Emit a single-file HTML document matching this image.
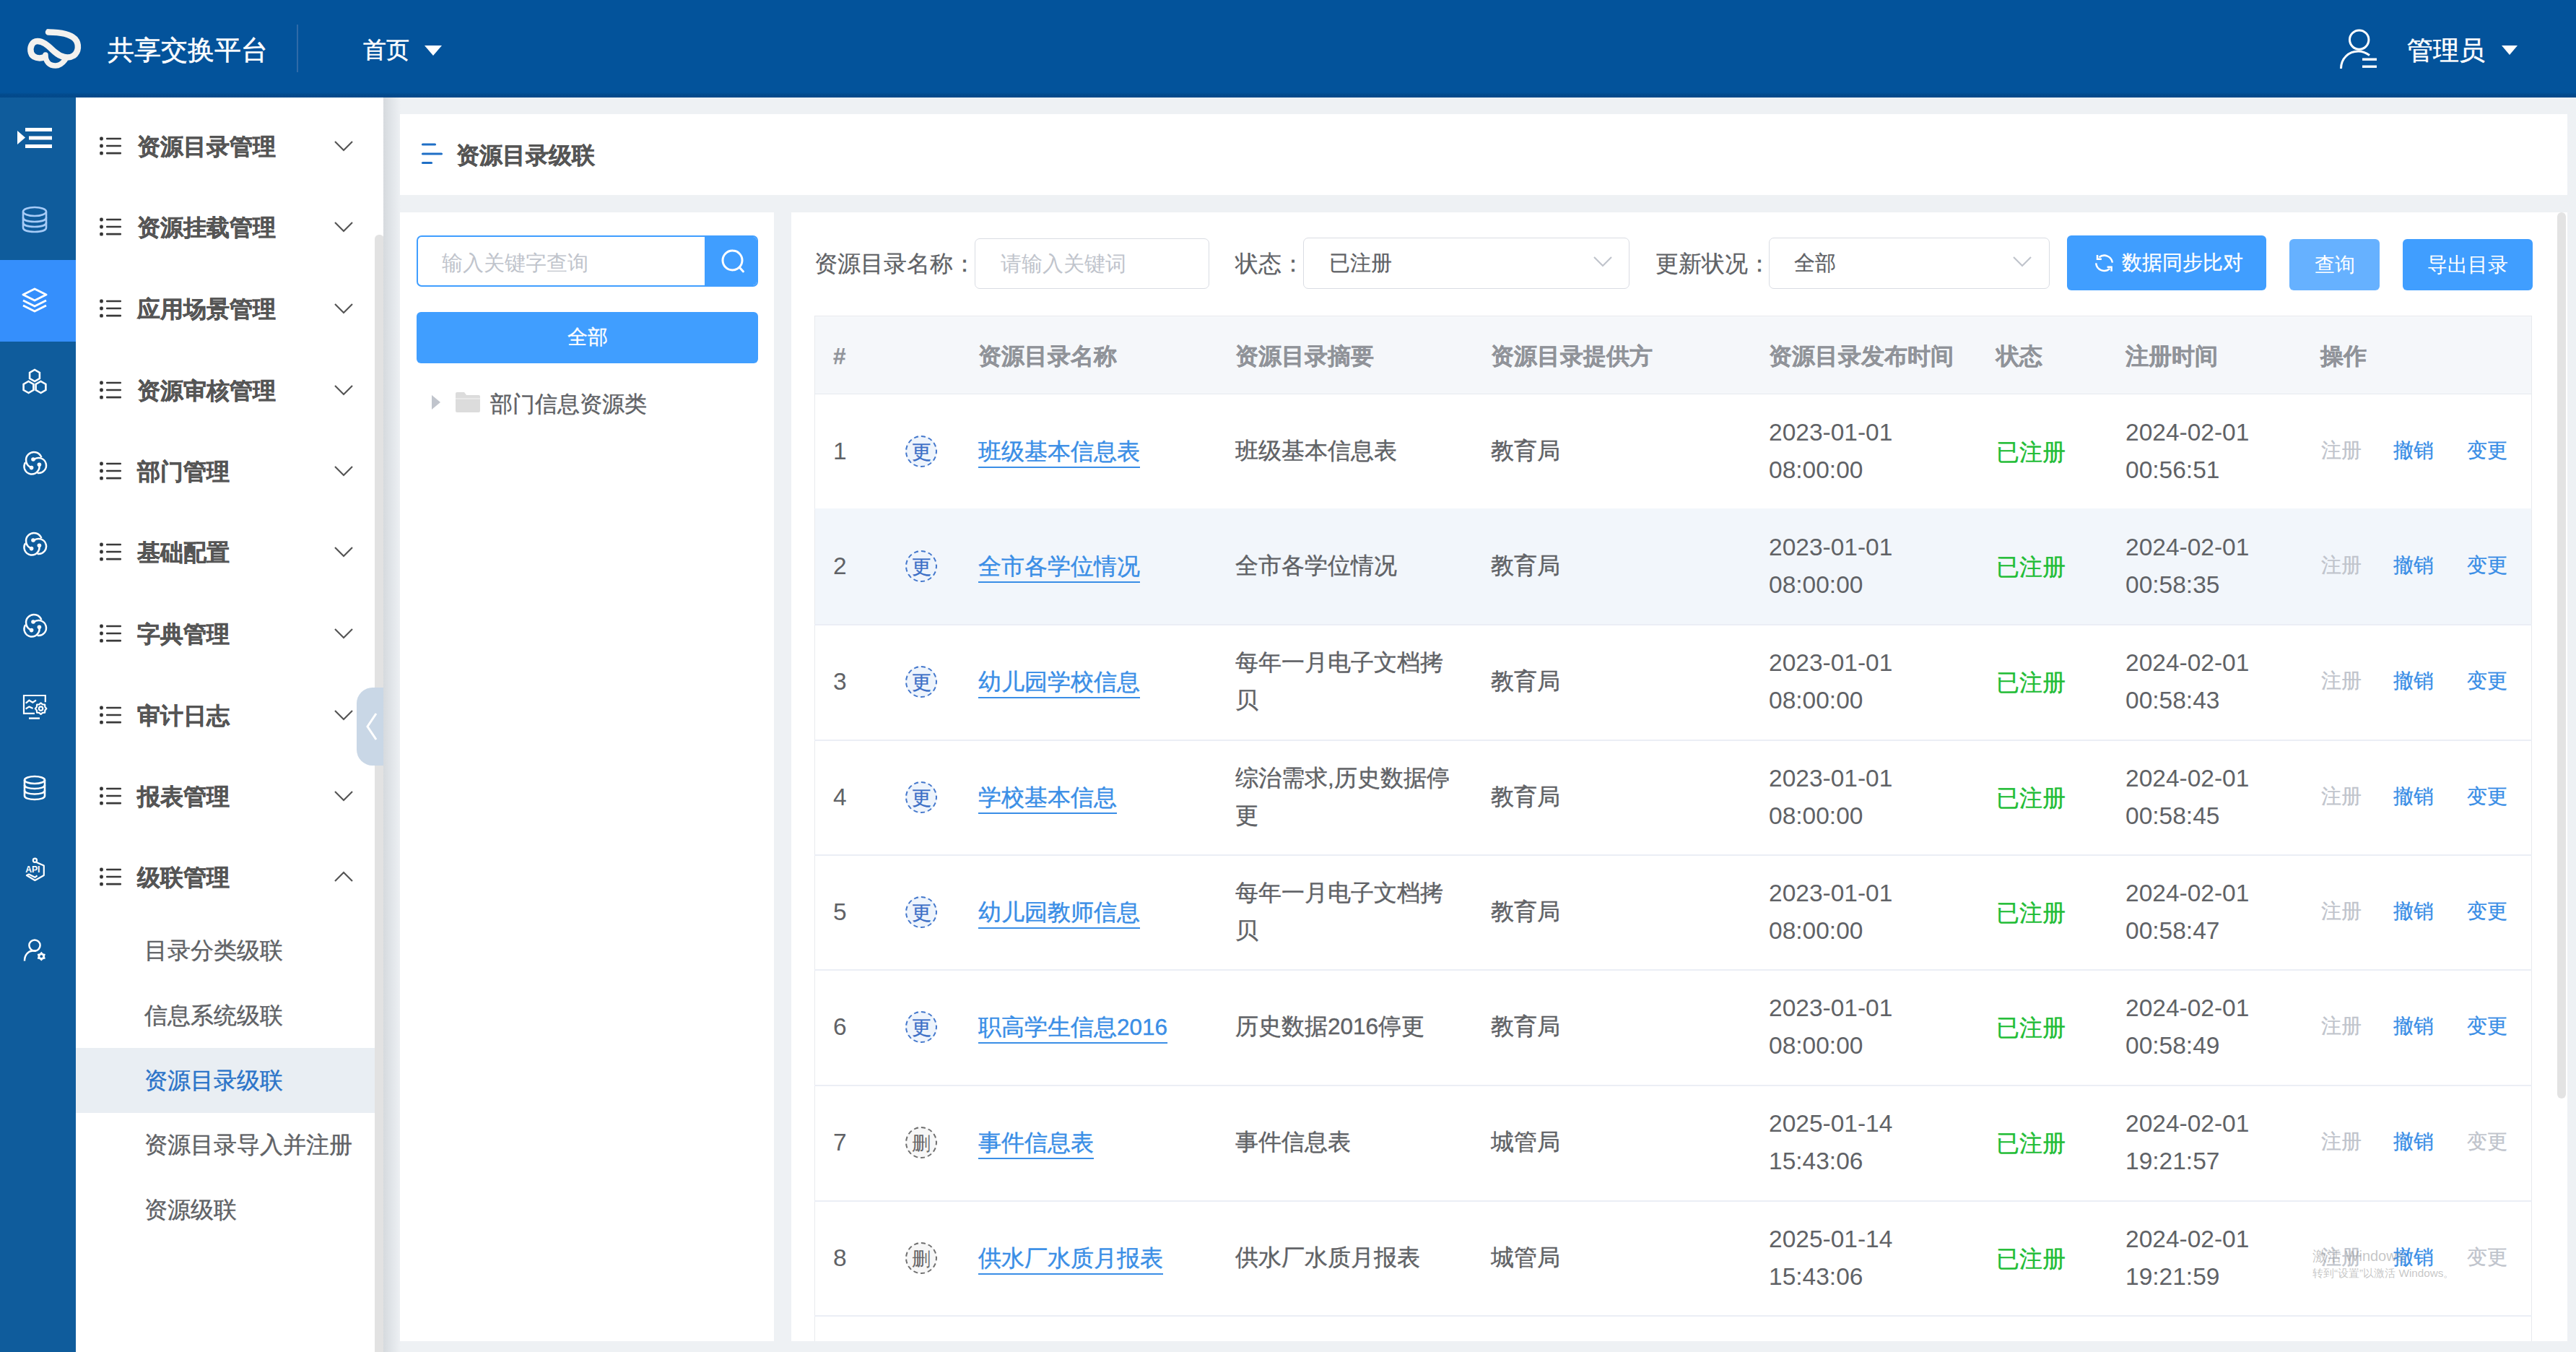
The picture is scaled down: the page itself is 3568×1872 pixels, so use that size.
<!DOCTYPE html><html><head><meta charset="utf-8"><style>
*{margin:0;padding:0;box-sizing:border-box}
html,body{width:3568px;height:1872px;overflow:hidden}
body{position:relative;background:#eef1f4;font-family:"Liberation Sans",sans-serif;color:#606266}
.a{position:absolute}
.t{position:absolute;white-space:nowrap;line-height:1}
#hdr{left:0;top:0;width:3568px;height:135px;background:linear-gradient(to bottom,#03539b 0,#03539b 128px,#024a8c 131px,#03498a 135px)}
#rail{left:0;top:135px;width:105px;height:1737px;background:#0f5c9c}
#side{left:105px;top:135px;width:427px;height:1737px;background:#fff}
.mi{font-weight:bold;font-size:31.5px;color:#555;-webkit-text-stroke:0.45px #555}
.sub{font-size:31.5px;-webkit-text-stroke:0.4px currentColor}
.panel{background:#fff}
.lbl{font-size:31.5px;color:#606266;-webkit-text-stroke:0.25px currentColor}
.ph{font-size:29px;color:#c0c4cc}
.btn{background:#409eff;border-radius:6px}
.th{font-weight:bold;font-size:31.5px;color:#909399;-webkit-text-stroke:0.25px currentColor}
.td{font-size:31.5px;color:#606266;-webkit-text-stroke:0.4px currentColor}
.num{font-size:33.5px;color:#606266}
.lnk{font-size:31.5px;color:#3a8ee6;text-decoration:underline;text-underline-offset:10px;text-decoration-thickness:2px;-webkit-text-stroke:0.4px currentColor}
.ok{font-size:31.5px;color:#1fbd36;-webkit-text-stroke:0.4px currentColor}
.op{font-size:28px;-webkit-text-stroke:0.3px currentColor}
.hl{position:absolute;left:1128px;width:2379px;height:1.5px;background:#ebeef5}
</style></head><body>
<div id="hdr" class="a">
<svg class="a" style="left:34px;top:36px" width="82" height="64" viewBox="0 0 82 64">
<path d="M33 8.5 C47 8.5, 63 11, 70 18 C76 25, 75 36, 68 41 C60 46, 50 43, 42 36 C34 29, 27 21, 18 21 C10 21, 7 30, 9 37 C11 44, 20 46, 28 43" fill="none" stroke="#f3f1ee" stroke-width="8.5" stroke-linecap="round"/>
<path d="M29 40 C29 50, 35 55, 43 55 C49 55, 53 51, 56 47" fill="none" stroke="#f3f1ee" stroke-width="7.5" stroke-linecap="round"/>
<path d="M30 4 L40 6 L40 11 Z" fill="#f3f1ee"/>
</svg>
<div class="t" style="left:149px;top:52px;font-size:36.5px;color:#fff;-webkit-text-stroke:0.5px #fff">共享交换平台</div>
<div class="a" style="left:411px;top:34px;width:2px;height:66px;background:#2f6aa8"></div>
<div class="t" style="left:503px;top:53px;font-size:32px;color:#fff;-webkit-text-stroke:0.5px #fff">首页</div>
<svg class="a" style="left:587px;top:62px" width="26" height="16" viewBox="0 0 26 16"><path d="M1 1 L25 1 L13 15 Z" fill="#fff"/></svg>
<svg class="a" style="left:3238px;top:39px" width="58" height="60" viewBox="0 0 58 60">
<circle cx="29.7" cy="16.1" r="13.2" fill="none" stroke="#fff" stroke-width="3"/>
<path d="M4.5 56 C4.5 42, 15 32, 28.5 32 C34 32, 39 34, 44 37.5" fill="none" stroke="#fff" stroke-width="3"/>
<rect x="34" y="41.5" width="20" height="3.4" fill="#fff"/><rect x="34" y="51.5" width="20" height="3.4" fill="#fff"/>
</svg>
<div class="t" style="left:3334px;top:52px;font-size:36px;color:#fff;-webkit-text-stroke:0.5px #fff">管理员</div>
<svg class="a" style="left:3464px;top:62px" width="24" height="15" viewBox="0 0 24 15"><path d="M1 1 L23 1 L12 14 Z" fill="#fff"/></svg>
</div>
<div id="rail" class="a"></div>
<div class="a" style="left:0;top:360px;width:105px;height:113px;background:#358ffc"></div>
<svg class="a" style="left:22px;top:175px" width="54" height="32" viewBox="0 0 54 32"><path d="M2 6 L13 15.5 L2 25 Z" fill="#fff"/><rect x="13" y="2" width="37" height="5" fill="#fff"/><rect x="18" y="13.5" width="32" height="5" fill="#fff"/><rect x="13" y="25" width="37" height="5" fill="#fff"/></svg>
<svg class="a" style="left:29px;top:285px" width="38" height="38" viewBox="0 0 38 38" fill="none" stroke="#a6cbf7" stroke-width="2.6"><ellipse cx="19" cy="8" rx="16" ry="6"/><path d="M3 8 V30 C3 34 10 36 19 36 C28 36 35 34 35 30 V8"/><path d="M3 16 C3 20 10 22 19 22 C28 22 35 20 35 16"/><path d="M3 23 C3 27 10 29 19 29 C28 29 35 27 35 23"/></svg>
<svg class="a" style="left:29px;top:397px" width="38" height="38" viewBox="0 0 38 38" fill="none" stroke="#fff" stroke-width="3" stroke-linejoin="round"><path d="M19 3 L35 11 L19 19 L3 11 Z"/><path d="M3 19 L19 27 L35 19"/><path d="M3 26 L19 34 L35 26"/></svg>
<svg class="a" style="left:29px;top:510px" width="38" height="38" viewBox="0 0 38 38" fill="none" stroke="#fff" stroke-width="2.6"><path d="M19.0 18.0 L12.1 14.0 L12.1 6.0 L19.0 2.0 L25.9 6.0 L25.9 14.0 Z"/><path d="M10.5 34.0 L3.6 30.0 L3.6 22.0 L10.5 18.0 L17.4 22.0 L17.4 30.0 Z"/><path d="M27.5 34.0 L20.6 30.0 L20.6 22.0 L27.5 18.0 L34.4 22.0 L34.4 30.0 Z"/></svg>
<svg class="a" style="left:24px;top:615px" width="48" height="50" viewBox="0 0 48 50" fill="none" stroke="#fff" stroke-width="2.5"><path d="M33.4 18.4 A11 11 0 1 0 19.24 32.34"/><path d="M22.47 21.7 A10.5 10.5 0 1 1 27.68 39.84"/><path d="M30.09 28.1 A10.5 10.5 0 1 1 11.2 25.28"/><circle cx="19.6" cy="32.6" r="2.8" fill="#fff" stroke="none"/><circle cx="22" cy="21" r="2.8" fill="#fff" stroke="none"/><circle cx="30.4" cy="28.2" r="2.8" fill="#fff" stroke="none"/></svg>
<svg class="a" style="left:24px;top:727px" width="48" height="50" viewBox="0 0 48 50" fill="none" stroke="#fff" stroke-width="2.5"><path d="M33.4 18.4 A11 11 0 1 0 19.24 32.34"/><path d="M22.47 21.7 A10.5 10.5 0 1 1 27.68 39.84"/><path d="M30.09 28.1 A10.5 10.5 0 1 1 11.2 25.28"/><circle cx="19.6" cy="32.6" r="2.8" fill="#fff" stroke="none"/><circle cx="22" cy="21" r="2.8" fill="#fff" stroke="none"/><circle cx="30.4" cy="28.2" r="2.8" fill="#fff" stroke="none"/></svg>
<svg class="a" style="left:24px;top:840px" width="48" height="50" viewBox="0 0 48 50" fill="none" stroke="#fff" stroke-width="2.5"><path d="M33.4 18.4 A11 11 0 1 0 19.24 32.34"/><path d="M22.47 21.7 A10.5 10.5 0 1 1 27.68 39.84"/><path d="M30.09 28.1 A10.5 10.5 0 1 1 11.2 25.28"/><circle cx="19.6" cy="32.6" r="2.8" fill="#fff" stroke="none"/><circle cx="22" cy="21" r="2.8" fill="#fff" stroke="none"/><circle cx="30.4" cy="28.2" r="2.8" fill="#fff" stroke="none"/></svg>
<svg class="a" style="left:20px;top:950px" width="56" height="60" viewBox="0 0 56 60" fill="none" stroke="#fff" stroke-width="2.2"><path d="M28 37.9 H13 V13 H42.8 V22.2"/><path d="M20 44.6 H35" stroke-width="2.4"/><path d="M16.4 23.1 L20.4 19.7 L25.3 22.6 L29.3 20" stroke-linecap="round"/><path d="M16.4 31 L20.4 28.4 L24.8 30.6" stroke-linecap="round"/><path d="M36.60 23.30 L38.97 25.37 L42.12 25.58 L42.33 28.73 L44.40 31.10 L42.33 33.47 L42.12 36.62 L38.97 36.83 L36.60 38.90 L34.23 36.83 L31.08 36.62 L30.87 33.47 L28.80 31.10 L30.87 28.73 L31.08 25.58 L34.23 25.37 Z" stroke-linejoin="round"/><circle cx="36.6" cy="31.1" r="2.7"/></svg>
<svg class="a" style="left:31px;top:1073px" width="34" height="36" viewBox="0 0 34 36" fill="none" stroke="#fff" stroke-width="2.6"><ellipse cx="17" cy="7" rx="14" ry="5"/><path d="M3 7 V29 C3 32 9 34 17 34 C25 34 31 32 31 29 V7"/><path d="M3 14 C3 17 9 19 17 19 C25 19 31 17 31 14"/><path d="M3 21.5 C3 24.5 9 26.5 17 26.5 C25 26.5 31 24.5 31 21.5"/></svg>
<svg class="a" style="left:20px;top:1172px" width="56" height="60" viewBox="0 0 56 60" fill="none" stroke="#fff" stroke-width="2.2" stroke-linejoin="round"><circle cx="28.4" cy="19.3" r="2.6"/><path d="M30.5 22 L40.8 26.5 V40 L28.4 47 L16.9 40 L20 38.5 L28.4 42.8 L31.5 40.4"/><text x="15.2" y="35.6" font-family="Liberation Sans" font-weight="bold" font-size="12.2" fill="#fff" stroke="none">API</text></svg>
<svg class="a" style="left:20px;top:1286px" width="56" height="60" viewBox="0 0 56 60" fill="none" stroke="#fff" stroke-width="2.5"><circle cx="28" cy="23.1" r="7.6"/><path d="M14 44.5 C14 36, 19 31, 25 30.5 L30 30.5"/><path d="M37.30 31.80 L39.60 34.22 L42.84 35.00 L41.90 38.20 L42.84 41.40 L39.60 42.18 L37.30 44.60 L35.00 42.18 L31.76 41.40 L32.70 38.20 L31.76 35.00 L35.00 34.22 Z" fill="#fff" stroke="none"/><circle cx="37.3" cy="38.2" r="1.9" fill="#0f5c9c" stroke="none"/></svg>
<div id="side" class="a"></div>
<div class="a" style="left:519px;top:325px;width:13px;height:1560px;background:#e2e2e2;border-radius:6px 6px 0 0"></div>
<svg class="a" style="left:137px;top:189.4px" width="34" height="28" viewBox="0 0 34 28"><rect x="1.2" y="0.6000000000000001" width="4.6" height="4.8" rx="1.6" fill="#333"/><rect x="10" y="1.7" width="21" height="2.6" rx="1" fill="#3a3a3a"/><rect x="1.2" y="10.6" width="4.6" height="4.8" rx="1.6" fill="#333"/><rect x="10" y="11.7" width="21" height="2.6" rx="1" fill="#3a3a3a"/><rect x="1.2" y="20.700000000000003" width="4.6" height="4.8" rx="1.6" fill="#333"/><rect x="10" y="21.8" width="21" height="2.6" rx="1" fill="#3a3a3a"/></svg>
<div class="t mi" style="left:190px;top:188px">资源目录管理</div>
<svg class="a" style="left:462px;top:192px" width="28" height="20" viewBox="0 0 28 20"><path d="M2 4 L14 16 L26 4" fill="none" stroke="#555" stroke-width="2.2"/></svg>
<svg class="a" style="left:137px;top:301.4px" width="34" height="28" viewBox="0 0 34 28"><rect x="1.2" y="0.6000000000000001" width="4.6" height="4.8" rx="1.6" fill="#333"/><rect x="10" y="1.7" width="21" height="2.6" rx="1" fill="#3a3a3a"/><rect x="1.2" y="10.6" width="4.6" height="4.8" rx="1.6" fill="#333"/><rect x="10" y="11.7" width="21" height="2.6" rx="1" fill="#3a3a3a"/><rect x="1.2" y="20.700000000000003" width="4.6" height="4.8" rx="1.6" fill="#333"/><rect x="10" y="21.8" width="21" height="2.6" rx="1" fill="#3a3a3a"/></svg>
<div class="t mi" style="left:190px;top:300px">资源挂载管理</div>
<svg class="a" style="left:462px;top:304px" width="28" height="20" viewBox="0 0 28 20"><path d="M2 4 L14 16 L26 4" fill="none" stroke="#555" stroke-width="2.2"/></svg>
<svg class="a" style="left:137px;top:414.4px" width="34" height="28" viewBox="0 0 34 28"><rect x="1.2" y="0.6000000000000001" width="4.6" height="4.8" rx="1.6" fill="#333"/><rect x="10" y="1.7" width="21" height="2.6" rx="1" fill="#3a3a3a"/><rect x="1.2" y="10.6" width="4.6" height="4.8" rx="1.6" fill="#333"/><rect x="10" y="11.7" width="21" height="2.6" rx="1" fill="#3a3a3a"/><rect x="1.2" y="20.700000000000003" width="4.6" height="4.8" rx="1.6" fill="#333"/><rect x="10" y="21.8" width="21" height="2.6" rx="1" fill="#3a3a3a"/></svg>
<div class="t mi" style="left:190px;top:413px">应用场景管理</div>
<svg class="a" style="left:462px;top:417px" width="28" height="20" viewBox="0 0 28 20"><path d="M2 4 L14 16 L26 4" fill="none" stroke="#555" stroke-width="2.2"/></svg>
<svg class="a" style="left:137px;top:527.4px" width="34" height="28" viewBox="0 0 34 28"><rect x="1.2" y="0.6000000000000001" width="4.6" height="4.8" rx="1.6" fill="#333"/><rect x="10" y="1.7" width="21" height="2.6" rx="1" fill="#3a3a3a"/><rect x="1.2" y="10.6" width="4.6" height="4.8" rx="1.6" fill="#333"/><rect x="10" y="11.7" width="21" height="2.6" rx="1" fill="#3a3a3a"/><rect x="1.2" y="20.700000000000003" width="4.6" height="4.8" rx="1.6" fill="#333"/><rect x="10" y="21.8" width="21" height="2.6" rx="1" fill="#3a3a3a"/></svg>
<div class="t mi" style="left:190px;top:526px">资源审核管理</div>
<svg class="a" style="left:462px;top:530px" width="28" height="20" viewBox="0 0 28 20"><path d="M2 4 L14 16 L26 4" fill="none" stroke="#555" stroke-width="2.2"/></svg>
<svg class="a" style="left:137px;top:639.4px" width="34" height="28" viewBox="0 0 34 28"><rect x="1.2" y="0.6000000000000001" width="4.6" height="4.8" rx="1.6" fill="#333"/><rect x="10" y="1.7" width="21" height="2.6" rx="1" fill="#3a3a3a"/><rect x="1.2" y="10.6" width="4.6" height="4.8" rx="1.6" fill="#333"/><rect x="10" y="11.7" width="21" height="2.6" rx="1" fill="#3a3a3a"/><rect x="1.2" y="20.700000000000003" width="4.6" height="4.8" rx="1.6" fill="#333"/><rect x="10" y="21.8" width="21" height="2.6" rx="1" fill="#3a3a3a"/></svg>
<div class="t mi" style="left:190px;top:638px">部门管理</div>
<svg class="a" style="left:462px;top:642px" width="28" height="20" viewBox="0 0 28 20"><path d="M2 4 L14 16 L26 4" fill="none" stroke="#555" stroke-width="2.2"/></svg>
<svg class="a" style="left:137px;top:751.4px" width="34" height="28" viewBox="0 0 34 28"><rect x="1.2" y="0.6000000000000001" width="4.6" height="4.8" rx="1.6" fill="#333"/><rect x="10" y="1.7" width="21" height="2.6" rx="1" fill="#3a3a3a"/><rect x="1.2" y="10.6" width="4.6" height="4.8" rx="1.6" fill="#333"/><rect x="10" y="11.7" width="21" height="2.6" rx="1" fill="#3a3a3a"/><rect x="1.2" y="20.700000000000003" width="4.6" height="4.8" rx="1.6" fill="#333"/><rect x="10" y="21.8" width="21" height="2.6" rx="1" fill="#3a3a3a"/></svg>
<div class="t mi" style="left:190px;top:750px">基础配置</div>
<svg class="a" style="left:462px;top:754px" width="28" height="20" viewBox="0 0 28 20"><path d="M2 4 L14 16 L26 4" fill="none" stroke="#555" stroke-width="2.2"/></svg>
<svg class="a" style="left:137px;top:864.4px" width="34" height="28" viewBox="0 0 34 28"><rect x="1.2" y="0.6000000000000001" width="4.6" height="4.8" rx="1.6" fill="#333"/><rect x="10" y="1.7" width="21" height="2.6" rx="1" fill="#3a3a3a"/><rect x="1.2" y="10.6" width="4.6" height="4.8" rx="1.6" fill="#333"/><rect x="10" y="11.7" width="21" height="2.6" rx="1" fill="#3a3a3a"/><rect x="1.2" y="20.700000000000003" width="4.6" height="4.8" rx="1.6" fill="#333"/><rect x="10" y="21.8" width="21" height="2.6" rx="1" fill="#3a3a3a"/></svg>
<div class="t mi" style="left:190px;top:863px">字典管理</div>
<svg class="a" style="left:462px;top:867px" width="28" height="20" viewBox="0 0 28 20"><path d="M2 4 L14 16 L26 4" fill="none" stroke="#555" stroke-width="2.2"/></svg>
<svg class="a" style="left:137px;top:977.4px" width="34" height="28" viewBox="0 0 34 28"><rect x="1.2" y="0.6000000000000001" width="4.6" height="4.8" rx="1.6" fill="#333"/><rect x="10" y="1.7" width="21" height="2.6" rx="1" fill="#3a3a3a"/><rect x="1.2" y="10.6" width="4.6" height="4.8" rx="1.6" fill="#333"/><rect x="10" y="11.7" width="21" height="2.6" rx="1" fill="#3a3a3a"/><rect x="1.2" y="20.700000000000003" width="4.6" height="4.8" rx="1.6" fill="#333"/><rect x="10" y="21.8" width="21" height="2.6" rx="1" fill="#3a3a3a"/></svg>
<div class="t mi" style="left:190px;top:976px">审计日志</div>
<svg class="a" style="left:462px;top:980px" width="28" height="20" viewBox="0 0 28 20"><path d="M2 4 L14 16 L26 4" fill="none" stroke="#555" stroke-width="2.2"/></svg>
<svg class="a" style="left:137px;top:1089.4px" width="34" height="28" viewBox="0 0 34 28"><rect x="1.2" y="0.6000000000000001" width="4.6" height="4.8" rx="1.6" fill="#333"/><rect x="10" y="1.7" width="21" height="2.6" rx="1" fill="#3a3a3a"/><rect x="1.2" y="10.6" width="4.6" height="4.8" rx="1.6" fill="#333"/><rect x="10" y="11.7" width="21" height="2.6" rx="1" fill="#3a3a3a"/><rect x="1.2" y="20.700000000000003" width="4.6" height="4.8" rx="1.6" fill="#333"/><rect x="10" y="21.8" width="21" height="2.6" rx="1" fill="#3a3a3a"/></svg>
<div class="t mi" style="left:190px;top:1088px">报表管理</div>
<svg class="a" style="left:462px;top:1092px" width="28" height="20" viewBox="0 0 28 20"><path d="M2 4 L14 16 L26 4" fill="none" stroke="#555" stroke-width="2.2"/></svg>
<svg class="a" style="left:137px;top:1201.4px" width="34" height="28" viewBox="0 0 34 28"><rect x="1.2" y="0.6000000000000001" width="4.6" height="4.8" rx="1.6" fill="#333"/><rect x="10" y="1.7" width="21" height="2.6" rx="1" fill="#3a3a3a"/><rect x="1.2" y="10.6" width="4.6" height="4.8" rx="1.6" fill="#333"/><rect x="10" y="11.7" width="21" height="2.6" rx="1" fill="#3a3a3a"/><rect x="1.2" y="20.700000000000003" width="4.6" height="4.8" rx="1.6" fill="#333"/><rect x="10" y="21.8" width="21" height="2.6" rx="1" fill="#3a3a3a"/></svg>
<div class="t mi" style="left:190px;top:1200px">级联管理</div>
<svg class="a" style="left:462px;top:1204px" width="28" height="20" viewBox="0 0 28 20"><path d="M2 16 L14 4 L26 16" fill="none" stroke="#555" stroke-width="2.2"/></svg>
<div class="a" style="left:105px;top:1451px;width:414px;height:90px;background:#e9eef3"></div>
<div class="t sub" style="left:200px;top:1301px;color:#606266">目录分类级联</div>
<div class="t sub" style="left:200px;top:1391px;color:#606266">信息系统级联</div>
<div class="t sub" style="left:200px;top:1481px;color:#2b74c9">资源目录级联</div>
<div class="t sub" style="left:200px;top:1570px;color:#606266">资源目录导入并注册</div>
<div class="t sub" style="left:200px;top:1660px;color:#606266">资源级联</div>
<div class="a" style="left:494px;top:952px;width:38px;height:108px;background:#c9d7e6;border-radius:22px 0 0 22px"></div>
<svg class="a" style="left:505px;top:986px" width="20" height="40" viewBox="0 0 20 40"><path d="M16 2 L4 20 L16 38" fill="none" stroke="#fff" stroke-width="3"/></svg>
<div class="a" style="left:531px;top:135px;width:24px;height:1737px;background:linear-gradient(to right,#d6dade,#dfe3e7 40%,#eef1f4)"></div>
<div class="a panel" style="left:554px;top:158px;width:3002px;height:112px"></div>
<svg class="a" style="left:582px;top:197px" width="34" height="32" viewBox="0 0 34 32" stroke="#1f6fc6" stroke-width="3.2" stroke-linecap="round"><path d="M3.5 3 H20.5"/><path d="M3.5 16 H29.5"/><path d="M3.5 28.5 H15.5"/></svg>
<div class="t mi" style="left:632px;top:200px;color:#555">资源目录级联</div>
<div class="a panel" style="left:554px;top:294px;width:518px;height:1563px"></div>
<div class="a" style="left:577px;top:326px;width:473px;height:71px;border:2px solid #409eff;border-radius:7px;overflow:hidden;background:#fff"><div class="a" style="left:397px;top:0;width:76px;height:71px;background:#409eff"></div></div>
<div class="t ph" style="left:612px;top:349px;font-size:29.3px">输入关键字查询</div>
<svg class="a" style="left:996px;top:342px" width="40" height="40" viewBox="0 0 40 40" fill="none" stroke="#fff" stroke-width="3"><circle cx="18.5" cy="18.5" r="13.5"/><path d="M28.5 28.5 L33.5 34" stroke-linecap="round"/></svg>
<div class="a btn" style="left:577px;top:432px;width:473px;height:71px"></div>
<div class="t" style="left:786px;top:453px;font-size:28px;color:#fff;-webkit-text-stroke:0.3px #fff">全部</div>
<svg class="a" style="left:598px;top:547px" width="13" height="20" viewBox="0 0 13 20"><path d="M0 0 L12 10 L0 20 Z" fill="#c0c4cc"/></svg>
<svg class="a" style="left:630px;top:542px" width="36" height="30" viewBox="0 0 36 30"><path d="M1 3 Q1 1 3 1 H13 L16 5 H33 Q35 5 35 7 V27 Q35 29 33 29 H3 Q1 29 1 27 Z" fill="#dcdcdc"/><path d="M1 10 H35" stroke="#ececec" stroke-width="1.5"/></svg>
<div class="t td" style="left:679px;top:544px;font-size:31px">部门信息资源类</div>
<div class="a panel" style="left:1096px;top:294px;width:2460px;height:1563px;overflow:hidden">
<div class="t lbl" style="left:32px;top:56px">资源目录名称：</div>
<div class="a" style="left:254px;top:36px;width:325px;height:70px;border:1.5px solid #d9dce3;border-radius:7px"></div>
<div class="t ph" style="left:290px;top:57px">请输入关键词</div>
<div class="t lbl" style="left:615px;top:56px">状态：</div>
<div class="a" style="left:709px;top:35px;width:452px;height:71px;border:1.5px solid #d9dce3;border-radius:7px"></div>
<div class="t lbl" style="left:745px;top:56px;font-size:29px">已注册</div>
<svg class="a" style="left:1110px;top:58px" width="28" height="20" viewBox="0 0 28 20"><path d="M2 4 L14 16 L26 4" fill="none" stroke="#c0c4cc" stroke-width="2.2"/></svg>
<div class="t lbl" style="left:1197px;top:56px">更新状况：</div>
<div class="a" style="left:1354px;top:35px;width:389px;height:71px;border:1.5px solid #d9dce3;border-radius:7px"></div>
<div class="t lbl" style="left:1389px;top:56px;font-size:29px">全部</div>
<svg class="a" style="left:1691px;top:58px" width="28" height="20" viewBox="0 0 28 20"><path d="M2 4 L14 16 L26 4" fill="none" stroke="#c0c4cc" stroke-width="2.2"/></svg>
<div class="a btn" style="left:1767px;top:32px;width:276px;height:76px"></div>
<svg class="a" style="left:1794px;top:46px" width="60" height="50" viewBox="0 0 60 50" fill="none" stroke="#fff" stroke-width="2.5"><path d="M35.9 23.7 A11.3 11.3 0 0 0 17.5 16.3"/><path d="M15 13 V18.8 H20.9"/><path d="M13.2 24.4 A11.3 11.3 0 0 0 32.2 31.8"/><path d="M28.6 29.8 H34.6 V35.8"/></svg>
<div class="t" style="left:1843px;top:56px;font-size:28px;color:#fff;-webkit-text-stroke:0.3px #fff">数据同步比对</div>
<div class="a btn" style="left:2075px;top:37px;width:125px;height:71px;background:#66b1ff"></div>
<div class="t" style="left:2110px;top:59px;font-size:28px;color:#fff">查询</div>
<div class="a btn" style="left:2232px;top:37px;width:180px;height:71px"></div>
<div class="t" style="left:2266px;top:59px;font-size:28px;color:#fff">导出目录</div>
<div class="a" style="left:2446px;top:0px;width:12px;height:1227px;background:#e3e3e3;border-radius:6px"></div>
<div class="a" style="left:32px;top:143px;width:2379px;height:108px;background:#f5f7fa"></div>
<div class="a" style="left:32px;top:143px;width:2379px;height:1500px;border:1.5px solid #e8eaee;border-bottom:none"></div>
<div class="a" style="left:32px;top:250.5px;width:2379px;height:1.5px;background:#e6e9ee"></div>
<div class="t th" style="left:58px;top:184px">#</div>
<div class="t th" style="left:259px;top:184px">资源目录名称</div>
<div class="t th" style="left:615px;top:184px">资源目录摘要</div>
<div class="t th" style="left:969px;top:184px">资源目录提供方</div>
<div class="t th" style="left:1354px;top:184px">资源目录发布时间</div>
<div class="t th" style="left:1669px;top:184px">状态</div>
<div class="t th" style="left:1848px;top:184px">注册时间</div>
<div class="t th" style="left:2118px;top:184px">操作</div>
<div class="a" style="left:32px;top:410px;width:2379px;height:1.5px;background:#ebeef5"></div>
<div class="t num" style="left:58px;top:313.5px">1</div>
<div class="a" style="left:158px;top:308.5px;width:44px;height:44px;border-radius:50%;border:2px dashed #4377cc;background:#eef4fc"></div>
<div class="t" style="left:167px;top:318.5px;font-size:27px;color:#3b6fc6;-webkit-text-stroke:0.3px currentColor">更</div>
<div class="t lnk" style="left:259px;top:315.5px">班级基本信息表</div>
<div class="t td" style="left:615px;top:314.5px">班级基本信息表</div>
<div class="t td" style="left:969px;top:314.5px">教育局</div>
<div class="t num" style="left:1354px;top:287.5px">2023-01-01</div>
<div class="t num" style="left:1354px;top:339.5px">08:00:00</div>
<div class="t ok" style="left:1669px;top:316.5px">已注册</div>
<div class="t num" style="left:1848px;top:287.5px">2024-02-01</div>
<div class="t num" style="left:1848px;top:339.5px">00:56:51</div>
<div class="t op" style="left:2119px;top:315.5px;color:#c0c4cc">注册</div>
<div class="t op" style="left:2219px;top:315.5px;color:#3a8ee6">撤销</div>
<div class="t op" style="left:2321px;top:315.5px;color:#3a8ee6">变更</div>
<div class="a" style="left:33px;top:410px;width:2377px;height:160px;background:#f2f6fb"></div>
<div class="a" style="left:32px;top:570px;width:2379px;height:1.5px;background:#ebeef5"></div>
<div class="t num" style="left:58px;top:473.0px">2</div>
<div class="a" style="left:158px;top:468.0px;width:44px;height:44px;border-radius:50%;border:2px dashed #4377cc;background:#eef4fc"></div>
<div class="t" style="left:167px;top:478.0px;font-size:27px;color:#3b6fc6;-webkit-text-stroke:0.3px currentColor">更</div>
<div class="t lnk" style="left:259px;top:475.0px">全市各学位情况</div>
<div class="t td" style="left:615px;top:474.0px">全市各学位情况</div>
<div class="t td" style="left:969px;top:474.0px">教育局</div>
<div class="t num" style="left:1354px;top:447.0px">2023-01-01</div>
<div class="t num" style="left:1354px;top:499.0px">08:00:00</div>
<div class="t ok" style="left:1669px;top:476.0px">已注册</div>
<div class="t num" style="left:1848px;top:447.0px">2024-02-01</div>
<div class="t num" style="left:1848px;top:499.0px">00:58:35</div>
<div class="t op" style="left:2119px;top:475.0px;color:#c0c4cc">注册</div>
<div class="t op" style="left:2219px;top:475.0px;color:#3a8ee6">撤销</div>
<div class="t op" style="left:2321px;top:475.0px;color:#3a8ee6">变更</div>
<div class="a" style="left:32px;top:730px;width:2379px;height:1.5px;background:#ebeef5"></div>
<div class="t num" style="left:58px;top:633.0px">3</div>
<div class="a" style="left:158px;top:628.0px;width:44px;height:44px;border-radius:50%;border:2px dashed #4377cc;background:#eef4fc"></div>
<div class="t" style="left:167px;top:638.0px;font-size:27px;color:#3b6fc6;-webkit-text-stroke:0.3px currentColor">更</div>
<div class="t lnk" style="left:259px;top:635.0px">幼儿园学校信息</div>
<div class="t td" style="left:615px;top:608.0px">每年一月电子文档拷</div>
<div class="t td" style="left:615px;top:660.0px">贝</div>
<div class="t td" style="left:969px;top:634.0px">教育局</div>
<div class="t num" style="left:1354px;top:607.0px">2023-01-01</div>
<div class="t num" style="left:1354px;top:659.0px">08:00:00</div>
<div class="t ok" style="left:1669px;top:636.0px">已注册</div>
<div class="t num" style="left:1848px;top:607.0px">2024-02-01</div>
<div class="t num" style="left:1848px;top:659.0px">00:58:43</div>
<div class="t op" style="left:2119px;top:635.0px;color:#c0c4cc">注册</div>
<div class="t op" style="left:2219px;top:635.0px;color:#3a8ee6">撤销</div>
<div class="t op" style="left:2321px;top:635.0px;color:#3a8ee6">变更</div>
<div class="a" style="left:32px;top:889px;width:2379px;height:1.5px;background:#ebeef5"></div>
<div class="t num" style="left:58px;top:792.5px">4</div>
<div class="a" style="left:158px;top:787.5px;width:44px;height:44px;border-radius:50%;border:2px dashed #4377cc;background:#eef4fc"></div>
<div class="t" style="left:167px;top:797.5px;font-size:27px;color:#3b6fc6;-webkit-text-stroke:0.3px currentColor">更</div>
<div class="t lnk" style="left:259px;top:794.5px">学校基本信息</div>
<div class="t td" style="left:615px;top:767.5px">综治需求,历史数据停</div>
<div class="t td" style="left:615px;top:819.5px">更</div>
<div class="t td" style="left:969px;top:793.5px">教育局</div>
<div class="t num" style="left:1354px;top:766.5px">2023-01-01</div>
<div class="t num" style="left:1354px;top:818.5px">08:00:00</div>
<div class="t ok" style="left:1669px;top:795.5px">已注册</div>
<div class="t num" style="left:1848px;top:766.5px">2024-02-01</div>
<div class="t num" style="left:1848px;top:818.5px">00:58:45</div>
<div class="t op" style="left:2119px;top:794.5px;color:#c0c4cc">注册</div>
<div class="t op" style="left:2219px;top:794.5px;color:#3a8ee6">撤销</div>
<div class="t op" style="left:2321px;top:794.5px;color:#3a8ee6">变更</div>
<div class="a" style="left:32px;top:1048px;width:2379px;height:1.5px;background:#ebeef5"></div>
<div class="t num" style="left:58px;top:951.5px">5</div>
<div class="a" style="left:158px;top:946.5px;width:44px;height:44px;border-radius:50%;border:2px dashed #4377cc;background:#eef4fc"></div>
<div class="t" style="left:167px;top:956.5px;font-size:27px;color:#3b6fc6;-webkit-text-stroke:0.3px currentColor">更</div>
<div class="t lnk" style="left:259px;top:953.5px">幼儿园教师信息</div>
<div class="t td" style="left:615px;top:926.5px">每年一月电子文档拷</div>
<div class="t td" style="left:615px;top:978.5px">贝</div>
<div class="t td" style="left:969px;top:952.5px">教育局</div>
<div class="t num" style="left:1354px;top:925.5px">2023-01-01</div>
<div class="t num" style="left:1354px;top:977.5px">08:00:00</div>
<div class="t ok" style="left:1669px;top:954.5px">已注册</div>
<div class="t num" style="left:1848px;top:925.5px">2024-02-01</div>
<div class="t num" style="left:1848px;top:977.5px">00:58:47</div>
<div class="t op" style="left:2119px;top:953.5px;color:#c0c4cc">注册</div>
<div class="t op" style="left:2219px;top:953.5px;color:#3a8ee6">撤销</div>
<div class="t op" style="left:2321px;top:953.5px;color:#3a8ee6">变更</div>
<div class="a" style="left:32px;top:1208px;width:2379px;height:1.5px;background:#ebeef5"></div>
<div class="t num" style="left:58px;top:1111.0px">6</div>
<div class="a" style="left:158px;top:1106.0px;width:44px;height:44px;border-radius:50%;border:2px dashed #4377cc;background:#eef4fc"></div>
<div class="t" style="left:167px;top:1116.0px;font-size:27px;color:#3b6fc6;-webkit-text-stroke:0.3px currentColor">更</div>
<div class="t lnk" style="left:259px;top:1113.0px">职高学生信息2016</div>
<div class="t td" style="left:615px;top:1112.0px">历史数据2016停更</div>
<div class="t td" style="left:969px;top:1112.0px">教育局</div>
<div class="t num" style="left:1354px;top:1085.0px">2023-01-01</div>
<div class="t num" style="left:1354px;top:1137.0px">08:00:00</div>
<div class="t ok" style="left:1669px;top:1114.0px">已注册</div>
<div class="t num" style="left:1848px;top:1085.0px">2024-02-01</div>
<div class="t num" style="left:1848px;top:1137.0px">00:58:49</div>
<div class="t op" style="left:2119px;top:1113.0px;color:#c0c4cc">注册</div>
<div class="t op" style="left:2219px;top:1113.0px;color:#3a8ee6">撤销</div>
<div class="t op" style="left:2321px;top:1113.0px;color:#3a8ee6">变更</div>
<div class="a" style="left:32px;top:1368px;width:2379px;height:1.5px;background:#ebeef5"></div>
<div class="t num" style="left:58px;top:1271.0px">7</div>
<div class="a" style="left:158px;top:1266.0px;width:44px;height:44px;border-radius:50%;border:2px dashed #6f6f6f;background:#f7f7f7"></div>
<div class="t" style="left:167px;top:1276.0px;font-size:26px;color:#666">删</div>
<div class="t lnk" style="left:259px;top:1273.0px">事件信息表</div>
<div class="t td" style="left:615px;top:1272.0px">事件信息表</div>
<div class="t td" style="left:969px;top:1272.0px">城管局</div>
<div class="t num" style="left:1354px;top:1245.0px">2025-01-14</div>
<div class="t num" style="left:1354px;top:1297.0px">15:43:06</div>
<div class="t ok" style="left:1669px;top:1274.0px">已注册</div>
<div class="t num" style="left:1848px;top:1245.0px">2024-02-01</div>
<div class="t num" style="left:1848px;top:1297.0px">19:21:57</div>
<div class="t op" style="left:2119px;top:1273.0px;color:#c0c4cc">注册</div>
<div class="t op" style="left:2219px;top:1273.0px;color:#3a8ee6">撤销</div>
<div class="t op" style="left:2321px;top:1273.0px;color:#c0c4cc">变更</div>
<div class="a" style="left:32px;top:1527px;width:2379px;height:1.5px;background:#ebeef5"></div>
<div class="t num" style="left:58px;top:1430.5px">8</div>
<div class="a" style="left:158px;top:1425.5px;width:44px;height:44px;border-radius:50%;border:2px dashed #6f6f6f;background:#f7f7f7"></div>
<div class="t" style="left:167px;top:1435.5px;font-size:26px;color:#666">删</div>
<div class="t lnk" style="left:259px;top:1432.5px">供水厂水质月报表</div>
<div class="t td" style="left:615px;top:1431.5px">供水厂水质月报表</div>
<div class="t td" style="left:969px;top:1431.5px">城管局</div>
<div class="t num" style="left:1354px;top:1404.5px">2025-01-14</div>
<div class="t num" style="left:1354px;top:1456.5px">15:43:06</div>
<div class="t ok" style="left:1669px;top:1433.5px">已注册</div>
<div class="t num" style="left:1848px;top:1404.5px">2024-02-01</div>
<div class="t num" style="left:1848px;top:1456.5px">19:21:59</div>
<div class="t op" style="left:2119px;top:1432.5px;color:#c0c4cc">注册</div>
<div class="t op" style="left:2219px;top:1432.5px;color:#3a8ee6">撤销</div>
<div class="t op" style="left:2321px;top:1432.5px;color:#c0c4cc">变更</div>
<div class="a" style="left:32px;top:1686px;width:2379px;height:1.5px;background:#ebeef5"></div>
</div>
<div class="t" style="left:3203px;top:1729px;font-size:20px;color:rgba(150,150,150,.55)">激活 Windows</div>
<div class="t" style="left:3203px;top:1755px;font-size:15.3px;color:rgba(150,150,150,.55)">转到“设置”以激活 Windows。</div>
</body></html>
